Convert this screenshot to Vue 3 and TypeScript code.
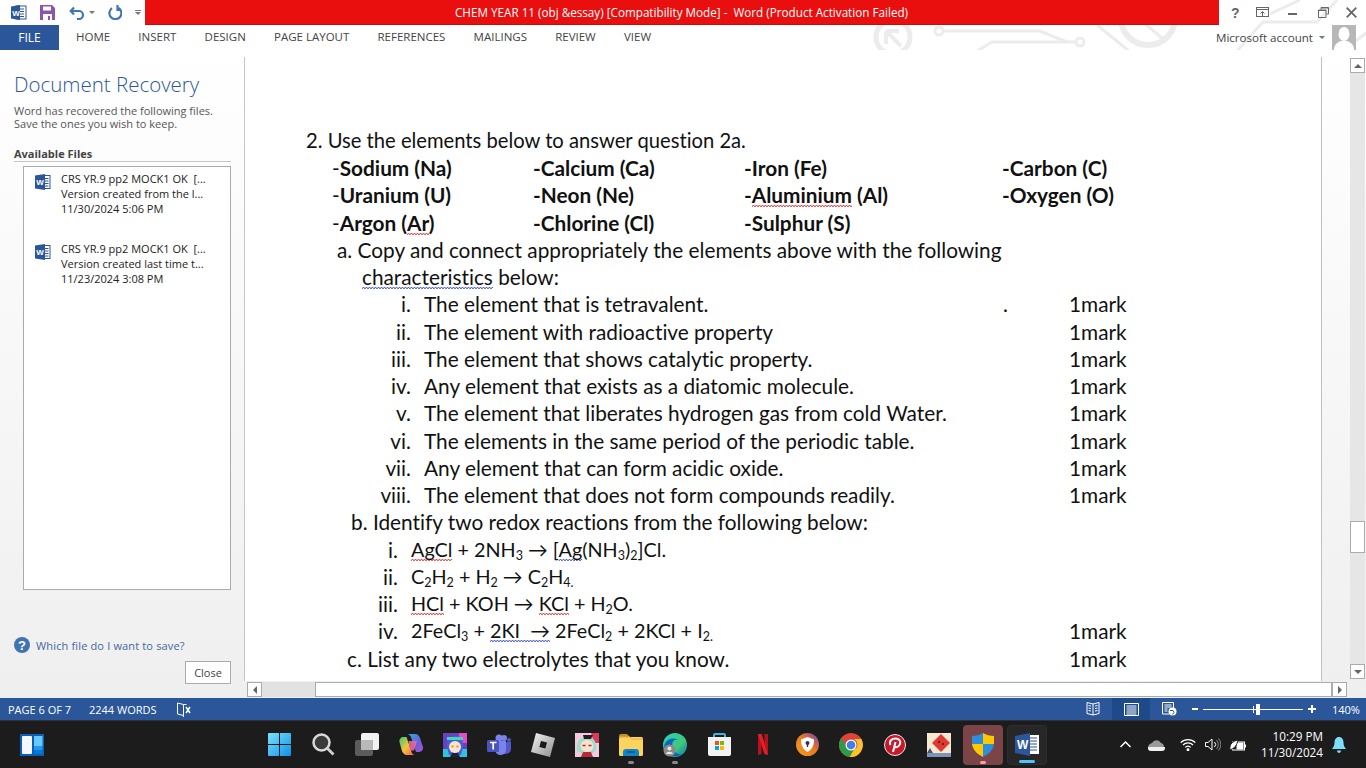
<script setup lang="ts">
const elements: string[][] = [
  ['Sodium (Na)', 'Calcium (Ca)', 'Iron (Fe)', 'Carbon (C)'],
  ['Uranium (U)', 'Neon (Ne)', '', 'Oxygen (O)'],
  ['Argon (Ar)', 'Chlorine (Cl)', 'Sulphur (S)', ''],
]
const traits = [
  ['i.', 'The element that is tetravalent.'],
  ['ii.', 'The element with radioactive property'],
  ['iii.', 'The element that shows catalytic property.'],
  ['iv.', 'Any element that exists as a diatomic molecule.'],
  ['v.', 'The element that liberates hydrogen gas from cold Water.'],
  ['vi.', 'The elements in the same period of the periodic table.'],
  ['vii.', 'Any element that can form acidic oxide.'],
  ['viii.', 'The element that does not form compounds readily.'],
]
const tabs = ['HOME', 'INSERT', 'DESIGN', 'PAGE LAYOUT', 'REFERENCES', 'MAILINGS', 'REVIEW', 'VIEW']
const files = [
  ['CRS YR.9 pp2 MOCK1 OK  [...', 'Version created from the l...', '11/30/2024 5:06 PM'],
  ['CRS YR.9 pp2 MOCK1 OK  [...', 'Version created last time t...', '11/23/2024 3:08 PM'],
]
</script>

<template>
  <div class="app">
    <svg class="circuit" width="496" height="50" viewBox="0 0 496 50" fill="none" stroke="#ececec" stroke-width="3">
      <circle cx="23" cy="37" r="17" stroke-width="5" />
      <path d="M16 31h13M16 31v13M16 31l15 15" stroke-width="4" />
      <circle cx="69" cy="31" r="4" />
      <path d="M73 31h97l27 11" />
      <circle cx="210" cy="42" r="4" />
      <path d="M205 42H122l-15 9" />
      <path d="M227 25l32 26M246 0l46 38" />
      <circle cx="278" cy="18" r="27" stroke-width="6" />
      <path d="M367 51l26-29h54l20-22M473 51l23-18M430 0l-30 14" />
    </svg>

    <header class="titlebar">
      <div class="qat">
        <svg class="q-word" width="17" height="17" viewBox="0 0 17 17">
          <rect x="6" y="2" width="10" height="13" fill="#fff" stroke="#2b579a" />
          <path d="M10 5h4M10 7.500h4M10 10h4M10 12.500h4" stroke="#2b579a" />
          <path d="M1 2.500 10 1v15l-9-1.500z" fill="#2b579a" />
          <text x="2.300" y="11.500" class="w-mark" font-size="8">W</text>
        </svg>
        <svg class="q-save" width="15" height="15" viewBox="0 0 15 15">
          <path d="M0 0h12l3 3v12H0z" fill="#8a56ad" />
          <rect x="3" y="1.500" width="8" height="4" fill="#fff" />
          <rect x="3" y="9" width="9" height="6" fill="#fff" />
          <rect x="8" y="11" width="2" height="4" fill="#8a56ad" />
        </svg>
        <svg class="q-undo" width="16" height="14" viewBox="0 0 16 14" fill="none" stroke="#3f77b5" stroke-width="2.200">
          <path d="M5 1.500 1.700 5 5 8.500M2 5h8a4 4 0 0 1 0 8H8" />
        </svg>
        <span class="caret q-caret" />
        <svg class="q-redo" width="14" height="15" viewBox="0 0 14 15" fill="none" stroke="#3f77b5" stroke-width="2.200">
          <path d="M4 3.200A6 6 0 1 0 10.500 3M9.500 0v5h3.500" />
        </svg>
        <span class="q-custom"><i /><span class="caret" /></span>
      </div>
      <div class="title">CHEM YEAR 11 (obj &amp;essay) [Compatibility Mode] -&nbsp; Word (Product Activation Failed)</div>
      <div class="winctl">
        <span class="help">?</span>
        <svg class="c1w" width="14" height="11" viewBox="0 0 14 11" fill="none" stroke="#666">
          <rect x=".5" y=".5" width="12" height="9" />
          <path d="M.5 2.500h12M6.500 9V4.500M4.500 6.500l2-2 2 2" />
        </svg>
        <i class="min" />
        <svg class="c2w" width="11" height="11" viewBox="0 0 11 11" fill="none" stroke="#666">
          <path d="M3 2.500V.5h7.500V7H8.500M.5 3h7.500v7.500H.5z" />
          <path d="M.5 3.500h7.500M3 1h7.500" stroke-width="1.200" />
        </svg>
        <svg width="11" height="11" viewBox="0 0 11 11" stroke="#666" stroke-width="1.800"><path d="M.7.700l9.600 9.600M10.300.700.7 10.300" /></svg>
      </div>
    </header>

    <nav class="tabs">
      <span class="file">FILE</span>
      <div class="tablist"><span v-for="t in tabs" :key="t">{{ t }}</span></div>
      <div class="account">
        <span>Microsoft account</span>
        <span class="caret" />
        <svg width="24" height="25" viewBox="0 0 24 25">
          <rect width="24" height="25" fill="#b7b7b7" />
          <ellipse cx="12" cy="9" rx="5.500" ry="7" fill="#fff" />
          <path d="M2 25c0-6 4-8 7-9h6c3 1 7 3 7 9z" fill="#fff" />
        </svg>
      </div>
    </nav>

    <main class="main">
      <aside class="recovery">
        <h1>Document Recovery</h1>
        <p class="lead">Word has recovered the following files.<br />Save the ones you wish to keep.</p>
        <h2>Available Files</h2>
        <ul class="files">
          <li v-for="(f, i) in files" :key="i">
            <svg width="16" height="16" viewBox="0 0 16 16">
              <rect x="5" y="1.500" width="10" height="13" fill="#fff" stroke="#2b579a" />
              <path d="M10 4.500h3.500M10 7h3.500M10 9.500h3.500M10 12h3.500" stroke="#2b579a" />
              <path d="M0 1.500 10 0v16L0 14.500z" fill="#2b579a" />
              <text x="1.300" y="11" class="w-mark" font-size="8">W</text>
            </svg>
            <div><div v-for="l in f" :key="l" class="fline">{{ l }}</div></div>
          </li>
        </ul>
        <a class="which">
          <svg width="16" height="16" viewBox="0 0 16 16"><circle cx="8" cy="8" r="8" fill="#3f74b0" /><text x="8" y="12.500" class="q-mark">?</text></svg>
          Which file do I want to save?
        </a>
        <div class="closerow"><button class="close">Close</button></div>
      </aside>

      <section class="docwrap">
        <div class="docrow">
          <article class="doc">
            <div class="l q2">2. Use the elements below to answer question 2a.</div>
            <div v-for="(row, r) in elements" :key="r" class="l els">
              <span v-for="(e, c) in row" :key="c">
                <template v-if="e === 'Argon (Ar)'"><span class="thin">-</span><b>Argon (<u class="sp">Ar</u>)</b></template>
                <template v-else-if="r === 1 && c === 2"><b>-<u class="sp">Aluminium</u> (Al)</b></template>
                <template v-else-if="e && c === 0"><span class="thin">-</span><b>{{ e }}</b></template>
                <template v-else-if="e"><b>-{{ e }}</b></template>
              </span>
            </div>
            <div class="l a1">a. Copy and connect appropriately the elements above with the following</div>
            <div class="l a2"><u class="gr">characteristics</u> below:</div>
            <div v-for="(t, i) in traits" :key="i" class="l trait">
              <span class="num">{{ t[0] }}</span>
              <span class="txt">{{ t[1] }}</span>
              <span class="dot">{{ i === 0 ? '.' : '' }}</span>
              <span>1mark</span>
            </div>
            <div class="l b1">b. Identify two redox reactions from the following below:</div>
            <div class="l rx"><span class="num">i.</span><span class="txt"><u class="sp">AgCl</u> + 2NH<sub>3</sub> → [<u class="gr">Ag</u>(NH<sub>3</sub>)<sub>2</sub>]Cl.</span><span /></div>
            <div class="l rx"><span class="num">ii.</span><span class="txt">C<sub>2</sub>H<sub>2</sub> + H<sub>2</sub> → C<sub>2</sub>H<sub>4.</sub></span><span /></div>
            <div class="l rx"><span class="num">iii.</span><span class="txt"><u class="sp">HCl</u> + KOH → <u class="sp">KCl</u> + H<sub>2</sub>O.</span><span /></div>
            <div class="l rx"><span class="num">iv.</span><span class="txt">2FeCl<sub>3</sub> + <u class="gr">2KI&nbsp; →</u> 2FeCl<sub>2</sub> + 2KCl + I<sub>2.</sub></span><span class="mk">1mark</span></div>
            <div class="l c1"><span>c. List any two electrolytes that you know.</span><span>1mark</span></div>
          </article>
          <div class="vscroll">
            <button class="sbtn"><span class="tri up" /></button>
            <div class="vtrack"><span class="vthumb" /></div>
            <button class="sbtn"><span class="tri down" /></button>
          </div>
        </div>
        <div class="hscroll">
          <button class="sbtn"><span class="tri left" /></button>
          <div class="hgap" />
          <span class="hthumb" />
          <button class="sbtn"><span class="tri right" /></button>
        </div>
      </section>
    </main>

    <footer class="status">
      <span class="s1">PAGE 6 OF 7</span>
      <span class="s2">2244 WORDS</span>
      <svg class="s3" width="16" height="15" viewBox="0 0 16 15" fill="none" stroke="#fff">
        <path d="M7.500 2.500 1.500 1v11l6 1.500zM7.500 2.500h3M7.500 13.500V15" />
        <path d="m10 5 4 6M14 5l-4 6" stroke-width="1.500" />
      </svg>
      <div class="views">
        <span class="view">
          <svg width="14" height="14" viewBox="0 0 14 14" fill="none" stroke="#fff">
            <path d="M7 2 1 .5v11L7 13l6-1.500V.5zM7 2v11M2.500 3.500 5 4M2.500 6 5 6.500M2.500 8.500 5 9M9 4l2.500-.5M9 6.500 11.500 6M9 9l2.500-.5" />
          </svg>
        </span>
        <span class="view on">
          <svg width="15" height="13" viewBox="0 0 15 13" fill="none" stroke="#fff"><path d="M.5.500h14v12H.5zM2.500 3h10M2.500 5h10M2.500 7h10M2.500 9h10M2.500 11h10" /></svg>
        </span>
        <span class="view">
          <svg width="15" height="14" viewBox="0 0 15 14" fill="none" stroke="#fff">
            <path d="M7 12H.5V.5h11V6M2.500 3h7M2.500 5h7M2.500 7h3M2.500 9h3" />
            <circle cx="10.500" cy="9.500" r="4" fill="#fff" stroke="none" />
            <path d="M8 8.500h3l1 2-1.500 2" stroke="#2b579a" />
          </svg>
        </span>
      </div>
      <div class="zoom">
        <i class="zminus" />
        <div class="slider"><i class="tick" /><i class="knob" /></div>
        <span class="zplus" />
      </div>
      <span class="pct">140%</span>
    </footer>

    <div class="taskbar">
      <svg class="widgets" width="24" height="22" viewBox="0 0 24 22">
        <rect width="24" height="22" fill="#0b5fb8" />
        <rect x="2" y="2" width="10" height="18" rx="1" fill="#f4f8fc" />
        <rect x="14" y="2" width="8.500" height="10" fill="#69c9fb" />
        <rect x="14" y="12" width="8.500" height="4" fill="#1e9bee" />
        <rect x="14" y="16" width="8.500" height="4" fill="#0878d8" />
      </svg>

      <div class="apps">
        <span class="app-i">
          <svg width="23" height="23" viewBox="0 0 23 23">
            <defs><linearGradient id="st" x1="0" y1="0" x2="1" y2="1"><stop offset="0" stop-color="#7be3fb" /><stop offset="1" stop-color="#0f8fe8" /></linearGradient></defs>
            <path d="M0 1a1 1 0 0 1 1-1h10v11H0zM12 0h10a1 1 0 0 1 1 1v10H12zM0 12h11v11H1a1 1 0 0 1-1-1zM12 12h11v10a1 1 0 0 1-1 1H12z" fill="url(#st)" />
          </svg>
        </span>
        <span class="app-i">
          <svg width="23" height="23" viewBox="0 0 23 23" fill="none">
            <circle cx="9.500" cy="9.500" r="8" stroke="#d8d8d8" stroke-width="2.500" fill="#3a3a3a" />
            <path d="m15.500 15.500 6 6" stroke="#d0d0d0" stroke-width="2.800" />
          </svg>
        </span>
        <span class="app-i">
          <svg width="24" height="23" viewBox="0 0 24 23">
            <rect y="7" width="18" height="16" rx="2" fill="#5c5c5c" />
            <rect x="6" width="18" height="17" rx="2" fill="#f2f2f2" />
            <rect x="6" y="7" width="12" height="10" fill="#b9b9b9" />
          </svg>
        </span>
        <span class="app-i">
          <svg width="24" height="23" viewBox="0 0 24 23">
            <defs>
              <linearGradient id="cp1" x1="0" y1="0" x2="1" y2="1"><stop offset="0" stop-color="#2fb0e8" /><stop offset=".6" stop-color="#6a5fd8" /><stop offset="1" stop-color="#b04fd8" /></linearGradient>
              <linearGradient id="cp2" x1="0" y1="0" x2="1" y2="1"><stop offset="0" stop-color="#38c878" /><stop offset=".5" stop-color="#f2c53a" /><stop offset="1" stop-color="#f25c54" /></linearGradient>
            </defs>
            <path d="M8 1h8c3 0 4 2 5 4l3 9c.5 3-1.500 5-4 5h-3l-5-15c-.5-1.500-2-3-4-3z" fill="url(#cp1)" />
            <path d="M16 22H8c-3 0-4-2-5-4L.5 9C0 6 2 4 4.500 4h3l5 15c.5 1.500 1.500 3 3.500 3z" fill="url(#cp2)" />
            <path d="M9.500 8h8.500l-3 9.500h-4z" fill="#e8699c" opacity=".9" />
          </svg>
        </span>
        <span class="app-i">
          <svg width="24" height="24" viewBox="0 0 24 24">
            <rect width="24" height="24" fill="#6a3fc0" />
            <rect x="0" y="16" width="24" height="8" fill="#28c8e0" />
            <rect x="16" y="0" width="8" height="10" fill="#e04fc8" />
            <path d="M4 14C3 5 8 3 12 3s9 2 8 11l-2 8H6z" fill="#4a5fd0" />
            <path d="M4 4h16v3H4z" fill="#3fd8b8" />
            <ellipse cx="12" cy="14" rx="6" ry="6" fill="#fbe3d4" />
            <circle cx="9.500" cy="13.500" r="1.300" fill="#d9b020" /><circle cx="14.500" cy="13.500" r="1.300" fill="#d9b020" />
            <path d="M7 24l2-4h6l2 4z" fill="#22233a" />
          </svg>
        </span>
        <span class="app-i">
          <svg width="24" height="22" viewBox="0 0 24 22">
            <circle cx="17" cy="4" r="3" fill="#7b83eb" /><circle cx="22" cy="6" r="2" fill="#5059c9" />
            <path d="M12 8h12v7a5 5 0 0 1-5 5h-3z" fill="#5059c9" />
            <circle cx="12" cy="4" r="3.500" fill="#7b83eb" />
            <path d="M8 7h11v9a5 5 0 0 1-5 5 6 6 0 0 1-6-5z" fill="#7b83eb" />
            <rect y="6" width="12" height="12" rx="1.500" fill="#4b53bc" />
            <path d="M3 8.500h6.500M6.200 8.500v7" stroke="#fff" stroke-width="1.700" />
          </svg>
        </span>
        <span class="app-i">
          <svg width="24" height="24" viewBox="0 0 24 24">
            <defs><linearGradient id="rb" x1="0" y1="0" x2="1" y2="1"><stop offset="0" stop-color="#f4f4f4" /><stop offset="1" stop-color="#8e8e8e" /></linearGradient></defs>
            <path d="M5 0 24 5l-5 19L0 19z" fill="url(#rb)" />
            <path d="m10 8 6 1.600-1.600 6-6-1.600z" fill="#1a1a1a" />
          </svg>
        </span>
        <span class="app-i">
          <svg width="24" height="24" viewBox="0 0 24 24">
            <rect width="24" height="24" fill="#f4c8e0" />
            <path d="M16 0h8v10h-5z" fill="#d83a5a" />
            <path d="M2 18C1 6 7 4 12 4s10 2 9 13l-3 3H6z" fill="#9fdcc8" />
            <path d="M8 2h10l-2 4H9z" fill="#2a1a1a" />
            <ellipse cx="12" cy="13" rx="6.500" ry="6" fill="#fbe0cf" />
            <path d="M7.500 12.500h3M13.500 12.500h3" stroke="#a03030" stroke-width="1.600" />
            <path d="M6 24l2-5h8l2 5z" fill="#b82a3a" />
          </svg>
        </span>
        <span class="app-i dotted">
          <svg width="24" height="22" viewBox="0 0 24 22">
            <path d="M0 2a2 2 0 0 1 2-2h6l3 3h-11z" fill="#c4902a" />
            <rect y="3" width="24" height="19" rx="1.500" fill="#fcd35f" />
            <path d="M0 3h11l2 2h11" stroke="#e8ad30" stroke-width="1" fill="none" />
            <path d="M4 22v-4a3 3 0 0 1 3-3h10a3 3 0 0 1 3 3v4z" fill="#1086c9" />
            <rect x="8" y="17" width="8" height="2" fill="#0c5e99" />
          </svg>
        </span>
        <span class="app-i dotted">
          <svg width="24" height="24" viewBox="0 0 24 24">
            <defs><linearGradient id="ed" x1="0" y1="0" x2="1" y2="1"><stop offset="0" stop-color="#2ad0c0" /><stop offset=".6" stop-color="#3fc878" /><stop offset="1" stop-color="#0a70c0" /></linearGradient></defs>
            <circle cx="12" cy="12" r="12" fill="url(#ed)" />
            <path d="M1 15C1 7 9 3 15 7c-5-1-7 3-5 8 1 4 5 7 9 6-6 5-17 1-18-6z" fill="#0d67b8" />
            <circle cx="6.500" cy="17.500" r="6" fill="#8a8a8a" />
            <circle cx="6.500" cy="15.500" r="2" fill="#e6e6e6" />
            <path d="M3 21c.5-3 6-3 7 0z" fill="#e6e6e6" />
          </svg>
        </span>
        <span class="app-i">
          <svg width="23" height="23" viewBox="0 0 23 23">
            <path d="M6 5V2a1 1 0 0 1 1-1h9a1 1 0 0 1 1 1v3" fill="none" stroke="#3bb4ea" stroke-width="2" />
            <path d="M0 4h23v17a2 2 0 0 1-2 2H2a2 2 0 0 1-2-2z" fill="#f3f3f3" />
            <rect x="7" y="8" width="4" height="4" fill="#f25022" /><rect x="12" y="8" width="4" height="4" fill="#7fba00" />
            <rect x="7" y="13" width="4" height="4" fill="#00a4ef" /><rect x="12" y="13" width="4" height="4" fill="#ffb900" />
          </svg>
        </span>
        <span class="app-i">
          <svg width="12" height="21" viewBox="0 0 12 21"><path d="M1 0h3.500l3 9V0H11v21l-3.500-1-3-9v9L1 21z" fill="#b8121e" /><path d="M1 0h3.500l6.500 21-3.500-1z" fill="#e02028" /></svg>
        </span>
        <span class="app-i">
          <svg width="23" height="23" viewBox="0 0 23 23">
            <defs><linearGradient id="av" x1="0" y1="1" x2="1" y2="0"><stop offset="0" stop-color="#f5a020" /><stop offset=".55" stop-color="#e87a20" /><stop offset="1" stop-color="#6a3fc0" /></linearGradient></defs>
            <circle cx="11.500" cy="11.500" r="11.500" fill="url(#av)" />
            <path d="M11.500 4 18 6.500c0 6-2 10-6.500 12.500C7 16.500 5 12.500 5 6.500z" fill="#fff" />
            <circle cx="11.500" cy="10" r="2" fill="#3a2a60" /><rect x="10.800" y="10" width="1.400" height="4" fill="#3a2a60" />
          </svg>
        </span>
        <span class="app-i">
          <svg width="24" height="24" viewBox="0 0 24 24">
            <circle cx="12" cy="12" r="12" fill="#db4437" />
            <path d="M2.300 4.900A12 12 0 0 0 10.700 23.900L15 16.500a5.500 5.500 0 0 1-8-3.500z" fill="#2d9a48" />
            <path d="M22.200 6H12a5.500 5.500 0 0 1 3 10.500L10.700 23.900A12 12 0 0 0 22.200 6z" fill="#f7c52b" />
            <circle cx="12" cy="12" r="5.500" fill="#fff" /><circle cx="12" cy="12" r="4.300" fill="#3f7fe8" />
          </svg>
        </span>
        <span class="app-i">
          <svg width="22" height="22" viewBox="0 0 22 22">
            <circle cx="11" cy="11" r="10.500" fill="#c8182a" stroke="#e8e8e8" />
            <path d="M9 18l2.500-10M6.500 11c-2-4 1.500-6.500 5-6.500s5.500 2.500 4.500 5.500-4 4-5.500 2.500" fill="none" stroke="#fff" stroke-width="2" />
          </svg>
        </span>
        <span class="app-i">
          <svg width="24" height="24" viewBox="0 0 24 24">
            <rect width="24" height="24" fill="#f8e8d2" />
            <rect y="20" width="24" height="4" fill="#7a93b8" />
            <path d="m14 1 9 9-9 9-9-9z" fill="#e03a30" />
            <circle cx="12" cy="9" r="1" fill="#3a1a1a" /><circle cx="16" cy="11" r="1" fill="#3a1a1a" />
            <path d="M0 20l3-5 3 5z" fill="#4a5468" />
          </svg>
        </span>
        <span class="app-i active-red">
          <svg width="22" height="24" viewBox="0 0 22 24">
            <path d="M11 0c3 2 7 3 11 3v8H11z" fill="#ffc800" />
            <path d="M11 0c-3 2-7 3-11 3v8h11z" fill="#2d8fdc" />
            <path d="M0 11h11v13C5 21 1 17 0 11z" fill="#ffc800" />
            <path d="M22 11H11v13c6-3 10-7 11-13z" fill="#2d8fdc" />
          </svg>
        </span>
        <span class="app-i active-word">
          <svg width="24" height="23" viewBox="0 0 24 23">
            <rect x="10" y="2" width="14" height="19" fill="#fff" />
            <path d="M14 5h8M14 8h8M14 11h8M14 14h8M14 17h8" stroke="#2b579a" stroke-width="1.200" />
            <path d="M0 3 15 0v23L0 20z" fill="#2b579a" />
            <text x="2" y="15.500" class="w-mark" font-size="12">W</text>
          </svg>
        </span>
      </div>

      <div class="tray">
        <svg class="t-chev" width="11" height="7" viewBox="0 0 11 7" fill="none" stroke="#fff" stroke-width="1.500"><path d="m.5 6 5-5 5 5" /></svg>
        <svg class="t-cloud" width="17" height="12" viewBox="0 0 17 12"><path d="M4 4a5 5 0 0 1 9 0c4 .5 4 8 0 8H3c-4-.5-4-7 1-8z" fill="#9a9a9a" /><path d="M0 8h17v1c0 2-1 3-3 3H3C1 12 0 11 0 9z" fill="#f0f0f0" /></svg>
        <svg class="t-wifi" width="16" height="13" viewBox="0 0 16 13" fill="none" stroke="#fff" stroke-width="1.300"><path d="M.7 4.500a10.500 10.500 0 0 1 14.600 0M3 7a7 7 0 0 1 10 0M5.300 9.300a3.500 3.500 0 0 1 5.400 0" /><circle cx="8" cy="11.800" r=".8" fill="#fff" /></svg>
        <svg class="t-sound" width="16" height="13" viewBox="0 0 16 13" fill="none" stroke="#fff"><path d="M.5 4.500h2.500L7 1v11L3 8.500H.5z" /><path d="M9.500 4a3.500 3.500 0 0 1 0 5" /><path d="M11.500 2a6.500 6.500 0 0 1 0 9M13.500.5a9 9 0 0 1 0 12" stroke="#888" /></svg>
        <svg class="t-batt" width="17" height="14" viewBox="0 0 17 14" fill="none" stroke="#fff"><rect x="3.500" y="4" width="12" height="8" /><path d="M16.500 6.500v3" /><path d="M8 5v6h6V5z" fill="#fff" /><path d="M1 12c-1-6 3-9 8-10-1 5-3 8-8 10z" fill="#fff" stroke="#1c1c1c" /></svg>
        <div class="clock"><div>10:29 PM</div><div>11/30/2024</div></div>
        <svg class="t-bell" width="14" height="16" viewBox="0 0 14 16"><path d="M7 0c3 0 4.500 2.500 4.500 5.500 0 3 1 4.500 2.500 6.500H0c1.500-2 2.500-3.500 2.500-6.500C2.500 2.500 4 0 7 0zM5 13.500h4c0 1.500-1 2.500-2 2.500s-2-1-2-2.500z" fill="#7fdcfa" /></svg>
      </div>
    </div>
  </div>
</template>

<style scoped>
.app {
  position: relative;
  width: 1366px;
  height: 768px;
  overflow: hidden;
  display: flex;
  flex-direction: column;
  background: #fff;
  font-family: "Open Sans", "Noto Sans", sans-serif;
  color: #444;
}
.circuit { position: absolute; top: 0; right: 0; }
.w-mark { font-family: "Liberation Sans", sans-serif; font-weight: 700; fill: #fff; }
.q-mark { font-family: "Liberation Sans", sans-serif; font-weight: 700; font-size: 13px; fill: #fff; text-anchor: middle; }
.caret { display: inline-block; width: 0; height: 0; border: 3px solid transparent; border-top: 3px solid #777; border-bottom: 0; }

.titlebar { position: relative; height: 25px; display: flex; flex: none; }
.qat { width: 145px; display: flex; align-items: center; }
.q-word { margin-left: 10px; }
.q-save { margin-left: 13px; }
.q-undo { margin-left: 14px; }
.q-caret { margin-left: 4px; }
.q-redo { margin-left: 13px; }
.q-custom { margin-left: 13px; display: flex; flex-direction: column; gap: 1px; align-items: center; }
.q-custom i { width: 6px; height: 1px; background: #777; }
.title { flex: 1; background: #ea0f0f; border-bottom: 1px solid #c70c0c; color: #fff; font-size: 11.700px; line-height: 24px; text-align: center; padding-right: 1px; white-space: pre; }
.winctl { width: 147px; display: flex; align-items: center; padding-left: 12px; box-sizing: border-box; color: #666; }
.winctl > * { flex: none; }
.help { font: 700 14px "Liberation Sans", sans-serif; width: 25px; }
.c1w { margin-right: 18px; }
.min { width: 9px; height: 2px; background: #666; margin-right: 21px; margin-top: 2px; }
.c2w { margin-right: 17px; }

.tabs { position: relative; height: 25px; flex: none; display: flex; align-items: center; font-size: 11.500px; }
.file { width: 59px; height: 25px; background: #2b579a; color: #fff; text-align: center; line-height: 25px; font-size: 12px; }
.tablist { display: flex; gap: 28.200px; margin-left: 17px; color: #444; line-height: 24px; height: 25px; }
.account { margin-left: auto; display: flex; align-items: center; padding-right: 10px; color: #444; font-size: 11.600px; line-height: 23px; }
.account .caret { margin: 0 7px 0 6px; }

.main { flex: 1; min-height: 0; display: flex; background: linear-gradient(#fff, #efefef); }
.recovery { width: 244px; flex: none; box-sizing: border-box; padding: 19px 13px 14px 14px; display: flex; flex-direction: column; }
h1 { margin: 0; font-size: 20.500px; font-weight: 300; line-height: 30px; color: #2b579a; white-space: nowrap; }
.lead { margin: 5px 0 0; font-size: 11px; line-height: 13px; color: #555; white-space: nowrap; }
h2 { margin: 16px 0 0; font-size: 11px; line-height: 15px; font-weight: 700; color: #444; border-bottom: 1px solid #c6c6c6; }
.files { list-style: none; margin: 4px 0 0 9px; padding: 4px 0 0 11px; flex: 1; min-height: 0; background: #fff; border: 1px solid #ababab; }
.files li { display: flex; gap: 10px; height: 70px; align-items: flex-start; }
.files svg { margin-top: 3px; flex: none; }
.fline { font-size: 11px; line-height: 15px; color: #222; white-space: pre; }
.which { margin-top: 47px; display: flex; align-items: center; gap: 6px; font-size: 11px; letter-spacing: .15px; color: #44689f; height: 16px; white-space: nowrap; }
.closerow { margin-top: 8px; display: flex; justify-content: flex-end; }
.close { width: 46px; height: 23px; box-sizing: border-box; background: #fff; border: 1px solid #ababab; padding: 0; font: 11px "Open Sans", sans-serif; color: #444; }

.docwrap { flex: 1; min-width: 0; display: flex; flex-direction: column; padding-top: 7px; }
.docrow { flex: 1; min-height: 0; display: flex; }
.doc { flex: 1; min-width: 0; box-sizing: border-box; padding: 69.800px 0 0; font-family: Lato, sans-serif; font-size: 20.800px; font-variant-ligatures: none; color: #111; background: #fff; border-left: 1px solid #c6c6c6; border-right: 1px solid #c0c0c0; overflow: hidden; }
.l { height: 27.260px; line-height: 27.260px; white-space: nowrap; }
.q2 { padding-left: 61px; font-size: 20.200px; }
.els { display: grid; grid-template-columns: 201px 211px 258px auto; padding-left: 87px; }
.thin { font-weight: 400; }
.a1 { padding-left: 92px; }
.a2 { padding-left: 117px; }
.trait { display: grid; grid-template-columns: 166px 553px 66px auto; column-gap: 13px; }
.num { text-align: right; }
.trait .dot { padding-left: 13px; }
.b1 { padding-left: 106px; }
.rx { display: grid; grid-template-columns: 153px 645px auto; column-gap: 13px; font-size: 19.800px; }
.rx .num { font-size: 20.800px; }
.rx .mk { font-size: 20.800px; }
.c1 { display: flex; padding-left: 102px; }
.c1 span:first-child { width: 722px; }
u { text-decoration: none; }
.sp { background: url("data:image/svg+xml,%3Csvg xmlns='http://www.w3.org/2000/svg' width='3' height='2'%3E%3Cpath d='M0 1.500 1.500.5 3 1.500' fill='none' stroke='%23e01010'/%3E%3C/svg%3E") repeat-x 0 100%; }
.gr { background: url("data:image/svg+xml,%3Csvg xmlns='http://www.w3.org/2000/svg' width='3' height='2'%3E%3Cpath d='M0 1.500 1.500.5 3 1.500' fill='none' stroke='%231a35d0'/%3E%3C/svg%3E") repeat-x 0 100%; }
sub { font-size: 12.500px; line-height: 0; vertical-align: -3px; }

.vscroll { width: 15px; flex: none; margin: 1px 1px 2px 28px; display: flex; flex-direction: column; background: #e6e6e6; }
.sbtn { width: 15px; height: 15px; padding: 0; flex: none; background: #fff; border: 1px solid #ababab; display: flex; align-items: center; justify-content: center; box-sizing: border-box; }
.vtrack { flex: 1; display: flex; flex-direction: column; padding-top: 448px; }
.vthumb { display: block; height: 32px; background: #fff; border: 1px solid #ababab; box-sizing: border-box; }
.hscroll { height: 15px; flex: none; display: flex; background: #e2e2e2; margin: 1px 19px 1px 3px; box-sizing: border-box; }
.hgap { width: 53px; }
.hthumb { flex: 1; background: #fff; border: 1px solid #ababab; box-sizing: border-box; }
.tri { width: 0; height: 0; border: 4px solid transparent; }
.tri.up { border-bottom-color: #666; border-top: 0; }
.tri.down { border-top-color: #666; border-bottom: 0; }
.tri.left { border-right-color: #666; border-left: 0; }
.tri.right { border-left-color: #666; border-right: 0; }

.status { height: 22px; flex: none; display: flex; align-items: center; background: #2b579a; color: #fff; font-size: 11px; }
.s1 { margin-left: 8px; width: 81px; }
.s2 { width: 87px; }
.views { margin-left: auto; display: flex; }
.view { width: 38px; height: 22px; display: flex; align-items: center; justify-content: center; }
.view.on { background: #1f4a8a; }
.zoom { display: flex; align-items: center; margin-left: 4px; }
.zminus { width: 6px; height: 2px; background: #fff; }
.slider { position: relative; width: 100px; height: 1px; background: #fff; margin: 0 5px; }
.tick { position: absolute; left: 50px; top: -3px; width: 1px; height: 7px; background: #fff; }
.knob { position: absolute; left: 53px; top: -5px; width: 4px; height: 11px; background: #fff; }
.zplus { width: 8px; height: 8px; background: linear-gradient(#fff, #fff) center/8px 2px no-repeat, linear-gradient(#fff, #fff) center/2px 8px no-repeat; }
.pct { margin-left: 16px; width: 34px; }

.taskbar { height: 48px; flex: none; display: flex; align-items: center; background: #1c1c1c; border-top: 1px solid #303030; box-sizing: border-box; color: #fff; }
.widgets { margin-left: 20px; }
.apps { margin-left: 213px; display: flex; align-items: center; }
.app-i { position: relative; width: 44px; height: 40px; display: flex; align-items: center; justify-content: center; box-sizing: border-box; }
.dotted::after, .active-red::after, .active-word::after { content: ""; position: absolute; bottom: 1px; left: 50%; transform: translateX(-50%); width: 6px; height: 3px; border-radius: 2px; background: #888; }
.active-red { width: 40px; margin: 0 2px; background: #7b4548; border-radius: 4px; }
.active-red::after { background: #f4a0a8; }
.active-word { width: 40px; margin: 0 2px; background: #272727; border-radius: 4px; border: 1px solid #2e2e2e; }
.active-word::after { width: 16px; background: #4cc2ff; }
.tray { margin-left: auto; display: flex; align-items: center; position: relative; width: 248px; height: 40px; }
.t-chev { margin-left: 2px; }
.t-cloud { margin-left: 17px; }
.t-wifi { margin-left: 15px; }
.t-sound { margin-left: 9px; }
.t-batt { margin-left: 8px; }
.clock { margin-left: 0; width: 77px; text-align: right; font-size: 11.700px; line-height: 16px; transform: translateY(-1px); }
.t-bell { margin-left: 9px; }
</style>

<style>
html, body { margin: 0; background: #fff; }
</style>
